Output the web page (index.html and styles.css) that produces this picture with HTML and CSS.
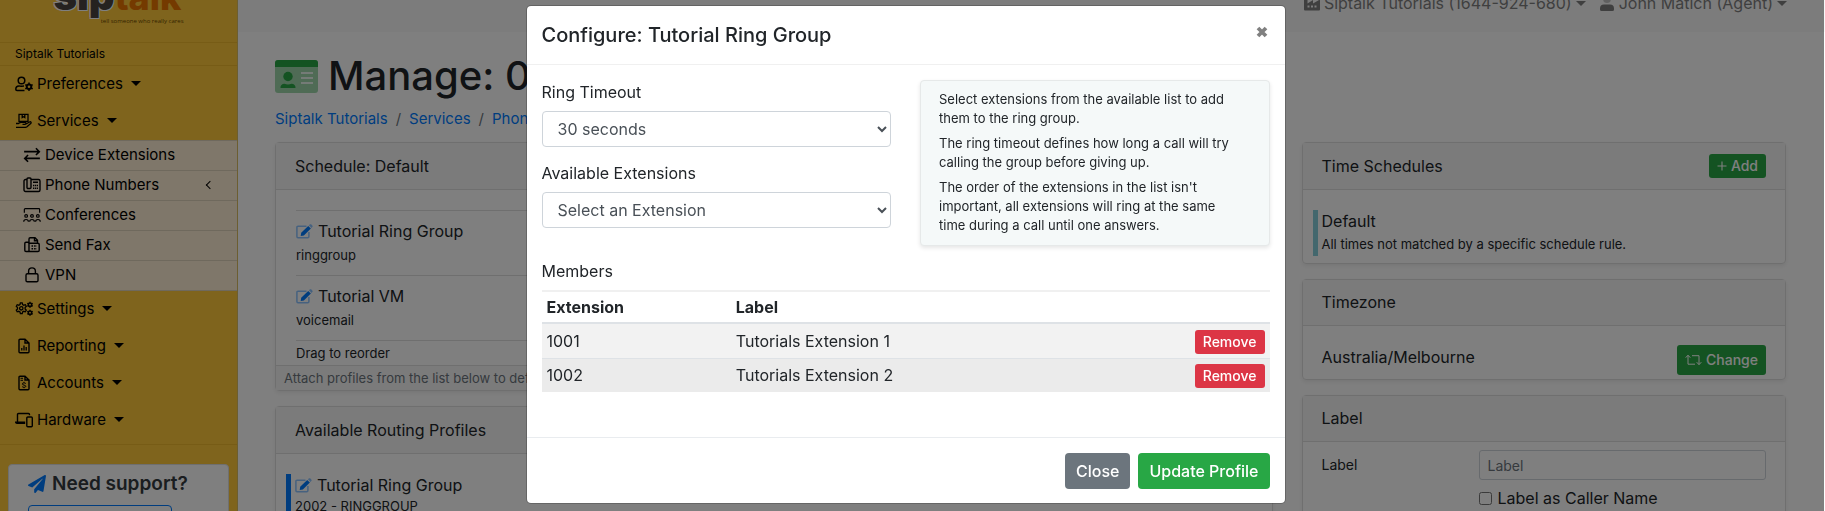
FILE: index.html
```html
<!DOCTYPE html>
<html lang="en">
<head>
<meta charset="utf-8">
<title>Siptalk - Manage</title>
<link rel="stylesheet" href="styles.css">
</head>
<body>
<svg class="sprite" aria-hidden="true">
  <symbol id="i-user-cog" viewBox="0 0 18 15"><g fill="none" stroke="currentColor" stroke-width="1.5"><circle cx="6.5" cy="4" r="3.3"/><path d="M9.5 14H2a1.2 1.2 0 0 1-1.2-1.2C.8 10.800 2 9.400 4 9.400c1 0 1.500.4 2.500.4s1.500-.4 2.500-.4"/></g><circle cx="14" cy="10.300" r="2.300" fill="none" stroke="currentColor" stroke-width="2"/><path d="M14 6v8.600M10.300 8.150l7.400 4.300M10.300 12.450l7.400-4.300" stroke="currentColor" stroke-width="1.500" stroke-dasharray="1.800 5"/></symbol>
  <symbol id="i-hand-box" viewBox="0 0 18 15"><g fill="none" stroke="currentColor" stroke-width="1.300"><path d="M4 .8h9v7H4zM7.200 1v3l1.300-.8 1.300.8V1"/><path d="M1 10h2.500c1-.8 2-1.100 3-1.100h3.500c1.400 0 1.400 1.900 0 1.900H7.500M10.500 10.800l4-2.300c1.300-.7 2.300.6 1.200 1.500l-3.700 3.200c-.5.4-1 .6-1.600.6H1"/></g></symbol>
  <symbol id="i-swap" viewBox="0 0 16 14"><g fill="none" stroke="currentColor" stroke-width="1.400"><path d="M1 4h13.500M11.500 1l3 3-3 3M15 10H1.500M4.500 7l-3 3 3 3"/></g></symbol>
  <symbol id="i-deskphone" viewBox="0 0 18 16"><g fill="none" stroke="currentColor" stroke-width="1.400"><rect x="4" y="1" width="4" height="10.500" rx="1"/><path d="M8 2.500h7.500a1.500 1.500 0 0 1 1.500 1.500v9a1.500 1.500 0 0 1-1.500 1.500h-13A1.500 1.500 0 0 1 1 13V4a1.500 1.500 0 0 1 1.500-1.500H4M10 5.200h5"/><path d="M10 8.500h5M10 11.300h5" stroke-dasharray="1.300 .6"/></g></symbol>
  <symbol id="i-conf" viewBox="0 0 20 16"><g fill="none" stroke="currentColor" stroke-width="1.300"><path d="M1.500 5.500V2A1 1 0 0 1 2.500 1h15a1 1 0 0 1 1 1v3.500"/><circle cx="3.500" cy="9" r="1.500"/><circle cx="10" cy="9" r="1.500"/><circle cx="16.500" cy="9" r="1.500"/><path d="M.8 15.500c0-3.300 5.200-3.300 5.200 0M7.400 15.500c0-3.300 5.200-3.300 5.200 0M14 15.500c0-3.300 5.200-3.300 5.200 0"/></g></symbol>
  <symbol id="i-fax" viewBox="0 0 16 16"><g fill="none" stroke="currentColor" stroke-width="1.400"><path d="M5 14.500H2A1.200 1.200 0 0 1 .8 13.300V6.500A1.200 1.200 0 0 1 2 5.300h1.800A1.200 1.200 0 0 1 5 6.500zV2A1.200 1.200 0 0 1 6.200.8h4.800L13.500 3.300v3M5 6.300h9a1.200 1.200 0 0 1 1.200 1.200v5.800a1.200 1.200 0 0 1-1.200 1.200H5M10.500 1v2.800h3"/><path d="M7.500 9h5.500M7.500 11.800h5.500" stroke-width="1.600" stroke-dasharray="1.600 1"/></g></symbol>
  <symbol id="i-lock" viewBox="0 0 14 16"><g fill="none" stroke="currentColor" stroke-width="1.400"><rect x="1" y="6.800" width="12" height="8" rx="1.400"/><path d="M3.600 6.800V4.300a3.400 3.400 0 0 1 6.800 0v2.500"/></g></symbol>
  <symbol id="i-gears" viewBox="0 0 18 15"><g fill="none" stroke="currentColor" stroke-width="1.300"><path d="M5.400 1.300h1.800l.4 1.700 1.200.7 1.600-.5.9 1.600-1.200 1.200v1.500l1.200 1.200-.9 1.600-1.600-.5-1.200.7-.4 1.700H5.400L5 10.500l-1.200-.7-1.600.5-.9-1.600 1.200-1.200V6L1.300 4.800l.9-1.600 1.600.5L5 3z"/><circle cx="6.300" cy="6.800" r="1.700"/><circle cx="15" cy="3.200" r="1.700" stroke-width="1.600"/><circle cx="15" cy="11.200" r="1.700" stroke-width="1.600"/><path d="M15 .2v1M15 5.200v1M12.300 1.700l.9.500M16.800 4.200l.9.500M12.300 4.700l.9-.5M16.800 2.200l.9-.5M15 8.200v1M15 13.200v1M12.300 9.700l.9.500M16.800 12.200l.9.500M12.300 12.700l.9-.5M16.800 10.200l.9-.5"/></g></symbol>
  <symbol id="i-report" viewBox="0 0 12 16"><path d="M2 1.200h5L11 5v8.800a1 1 0 0 1-1 1H2a1 1 0 0 1-1-1V2.200a1 1 0 0 1 1-1zM7 1.200V5h4" fill="none" stroke="currentColor" stroke-width="1.400"/><path d="M3.800 12.500v-2.500M6 12.500V7.500M8.200 12.500V9" stroke="currentColor" stroke-width="1.300"/></symbol>
  <symbol id="i-invoice" viewBox="0 0 12 16"><path d="M2 1.200h5L11 5v8.800a1 1 0 0 1-1 1H2a1 1 0 0 1-1-1V2.200a1 1 0 0 1 1-1zM7 1.200V5h4" fill="none" stroke="currentColor" stroke-width="1.400"/><path d="M2.500 3.300h2.500M2.500 5.300h2.500M7.800 8.500C6.500 7.500 4.200 7.800 4.300 9.100c.1 1.200 3.500.8 3.500 2.200 0 1.200-2.400 1.300-3.600.4M6 6.800v1M6 12.200v1" fill="none" stroke="currentColor" stroke-width="1"/></symbol>
  <symbol id="i-devices" viewBox="0 0 18 15"><g fill="none" stroke="currentColor" stroke-width="1.400"><path d="M2.500 9.500V2A1 1 0 0 1 3.500 1h10a1 1 0 0 1 1 1v.8"/><rect x="11.800" y="4.500" width="5.500" height="9.700" rx="1"/></g><path d="M0 9h10.200v2.500H2A2 2 0 0 1 0 9z" fill="currentColor"/></symbol>
  <symbol id="i-plane" viewBox="0 0 512 512"><path fill="currentColor" d="M476 3.200 12.500 270.600c-18.100 10.400-15.800 35.600 2.200 43.200L121 358.400l287.300-253.200c5.500-4.900 13.300 2.600 8.600 8.300L176 407v80.500c0 23.600 28.500 32.900 42.500 15.800L282 426l124.600 52.200c14.200 6 30.400-2.900 33-18.200l72-432C515 7.800 493.300-6.800 476 3.200z"/></symbol>
  <symbol id="i-edit" viewBox="0 0 17 15"><path d="M10.500 2.200H2a1.100 1.100 0 0 0-1.100 1.100v9.300A1.100 1.100 0 0 0 2 13.700h9.800a1.100 1.100 0 0 0 1.100-1.100V8" fill="none" stroke="currentColor" stroke-width="1.500" opacity=".45"/><path d="M12.200 1.900l2.700 2.700-7 6.800-3.200.6.5-3.300z" fill="currentColor"/><path d="M12.900 1.200l.8-.7c.5-.5 1.200-.5 1.700 0l.9.900c.5.5.5 1.200 0 1.700l-.7.800z" fill="currentColor" opacity=".45"/></symbol>
  <symbol id="i-factory" viewBox="0 0 16 15"><path fill="currentColor" fill-rule="evenodd" d="M0 1h3.500v7L9 4.500V8l6-3.500c.5-.3 1 0 1 .5V14a1 1 0 0 1-1 1H1a1 1 0 0 1-1-1zM3.500 10v2h2v-2zM7 10v2h2v-2zM10.500 10v2h2v-2z"/></symbol>
  <symbol id="i-user" viewBox="0 0 14 16"><circle cx="7" cy="4" r="3.900" fill="currentColor" opacity=".45"/><path fill="currentColor" d="M4 9.500h6a4 4 0 0 1 4 4v1a1.500 1.500 0 0 1-1.500 1.500h-11A1.500 1.500 0 0 1 0 14.500v-1a4 4 0 0 1 4-4z"/></symbol>
  <symbol id="i-card" viewBox="0 0 43 33"><rect width="43" height="33" rx="3" fill="#28a745" opacity=".45"/><path d="M3 0h37a3 3 0 0 1 3 3v4H0V3a3 3 0 0 1 3-3z" fill="#28a745"/><circle cx="13" cy="16.500" r="4.700" fill="#28a745"/><path d="M5.500 28c-.3-2.500 1.500-4.200 4-4.200 2 .8 5 .8 7 0 2.500 0 4.300 1.700 4 4.200z" fill="#28a745"/><path d="M26 13h12M26 18h12M26 23h12" stroke="#fff" stroke-width="1.800" opacity=".8"/></symbol>
  <symbol id="i-retweet" viewBox="0 0 17 12"><path d="M.7 3.700L3 1.200l2.300 2.500M3 1.500v8.700h7M7 1.700h7v8.700M11.700 8.200L14 10.700l2.300-2.500" fill="none" stroke="currentColor" stroke-width="1"/></symbol>
  <symbol id="i-plus" viewBox="0 0 10 10"><path d="M5 .5v9M.5 5h9" stroke="currentColor" stroke-width="1.100"/></symbol>
  <symbol id="i-close" viewBox="0 0 12 12"><path d="M2 2l8 8M10 2l-8 8" stroke="currentColor" stroke-width="3.800"/></symbol>
</svg>

<div class="page">
  <aside class="sidebar">
    <div class="brand">
      <div class="logo">
        <div class="logo-name"><span class="logo-sip">sip</span><span class="logo-talk">talk</span></div>
        <div class="logo-tag">tell someone who really cares</div>
      </div>
    </div>
    <div class="org">Siptalk Tutorials</div>
    <nav class="menu">
      <a class="menu-item" href="#"><svg class="menu-icon"><use href="#i-user-cog"/></svg>Preferences<i class="caret"></i></a>
      <a class="menu-item" href="#"><svg class="menu-icon"><use href="#i-hand-box"/></svg>Services<i class="caret"></i></a>
      <div class="submenu">
        <a class="sub-item" href="#"><svg class="menu-icon"><use href="#i-swap"/></svg>Device Extensions</a>
        <a class="sub-item" href="#"><svg class="menu-icon"><use href="#i-deskphone"/></svg>Phone Numbers<i class="chevron"></i></a>
        <a class="sub-item" href="#"><svg class="menu-icon"><use href="#i-conf"/></svg>Conferences</a>
        <a class="sub-item" href="#"><svg class="menu-icon"><use href="#i-fax"/></svg>Send Fax</a>
        <a class="sub-item" href="#"><svg class="menu-icon"><use href="#i-lock"/></svg>VPN</a>
      </div>
      <a class="menu-item" href="#"><svg class="menu-icon"><use href="#i-gears"/></svg>Settings<i class="caret"></i></a>
      <a class="menu-item" href="#"><svg class="menu-icon"><use href="#i-report"/></svg>Reporting<i class="caret"></i></a>
      <a class="menu-item" href="#"><svg class="menu-icon"><use href="#i-invoice"/></svg>Accounts<i class="caret"></i></a>
      <a class="menu-item" href="#"><svg class="menu-icon"><use href="#i-devices"/></svg>Hardware<i class="caret"></i></a>
    </nav>
    <div class="support">
      <h2 class="support-title"><svg class="plane"><use href="#i-plane"/></svg>Need support?</h2>
      <button class="support-button" type="button" aria-label="Contact support"></button>
    </div>
  </aside>

  <div class="content">
    <header class="topbar">
      <a class="top-link" href="#"><svg class="top-icon"><use href="#i-factory"/></svg>Siptalk Tutorials (1644-924-680)<i class="caret"></i></a>
      <a class="top-link" href="#"><svg class="top-icon"><use href="#i-user"/></svg>John Matich (Agent)<i class="caret"></i></a>
    </header>
    <main class="main">
      <h1 class="title"><svg class="title-icon"><use href="#i-card"/></svg>Manage: 0</h1>
      <nav class="crumbs"><a href="#">Siptalk Tutorials</a><span>/</span><a href="#">Services</a><span>/</span><a href="#">Phone</a></nav>
      <div class="columns">
        <div>
          <section class="card">
            <h2 class="card-head">Schedule: Default</h2>
            <div class="card-body">
              <div class="profile"><div class="profile-name"><svg class="edit"><use href="#i-edit"/></svg>Tutorial Ring Group</div><div class="small">ringgroup</div></div>
              <div class="profile"><div class="profile-name"><svg class="edit"><use href="#i-edit"/></svg>Tutorial VM</div><div class="small">voicemail</div></div>
              <div class="drag small">Drag to reorder</div>
            </div>
            <div class="card-foot small">Attach profiles from the list below to define</div>
          </section>
          <section class="card">
            <h2 class="card-head">Available Routing Profiles</h2>
            <div class="card-list">
              <div class="marked blue"><div class="profile-name"><svg class="edit"><use href="#i-edit"/></svg>Tutorial Ring Group</div><div class="small">2002 - RINGGROUP</div></div>
            </div>
          </section>
        </div>
        <div>
          <section class="card">
            <div class="card-head"><h2>Time Schedules</h2><button class="btn small-btn green" type="button"><svg class="plus"><use href="#i-plus"/></svg>Add</button></div>
            <div class="card-list">
              <div class="marked cyan"><div class="profile-name">Default</div><div class="small">All times not matched by a specific schedule rule.</div></div>
            </div>
          </section>
          <section class="card">
            <h2 class="card-head compact">Timezone</h2>
            <div class="zone"><span>Australia/Melbourne</span><button class="btn mid-btn green" type="button"><svg class="retweet"><use href="#i-retweet"/></svg>Change</button></div>
          </section>
          <section class="card">
            <h2 class="card-head compact">Label</h2>
            <div class="label-form">
              <label class="field-label" for="label">Label</label>
              <input class="text-input" id="label" type="text" placeholder="Label">
              <div class="check"><input id="caller" type="checkbox"><label for="caller">Label as Caller Name</label></div>
            </div>
          </section>
        </div>
      </div>
    </main>
  </div>
</div>

<div class="backdrop"></div>
<div class="modal-wrap">
  <div class="modal" role="dialog" aria-labelledby="modal-title">
    <div class="modal-head">
      <h2 id="modal-title">Configure: Tutorial Ring Group</h2>
      <button class="close" type="button" aria-label="Close dialog"><svg><use href="#i-close"/></svg></button>
    </div>
    <div class="modal-body">
      <div class="setup">
        <div class="fields">
          <label for="timeout">Ring Timeout</label>
          <select class="select" id="timeout"><option>30 seconds</option></select>
          <label for="ext">Available Extensions</label>
          <select class="select" id="ext"><option>Select an Extension</option></select>
        </div>
        <div class="help">
          <p>Select extensions from the available list to add them to the ring group.</p>
          <p>The ring timeout defines how long a call will try calling the group before giving up.</p>
          <p>The order of the extensions in the list isn't important, all extensions will ring at the same time during a call until one answers.</p>
        </div>
      </div>
      <h3 class="members">Members</h3>
      <table class="table">
        <thead><tr><th class="c-ext">Extension</th><th>Label</th><th class="c-act"></th></tr></thead>
        <tbody>
          <tr><td>1001</td><td>Tutorials Extension 1</td><td class="c-act"><button class="btn small-btn red" type="button">Remove</button></td></tr>
          <tr><td>1002</td><td>Tutorials Extension 2</td><td class="c-act"><button class="btn small-btn red" type="button">Remove</button></td></tr>
        </tbody>
      </table>
    </div>
    <div class="modal-foot">
      <button class="btn gray" type="button">Close</button>
      <button class="btn green" type="button">Update Profile</button>
    </div>
  </div>
</div>
</body>
</html>
```
FILE: styles.css
```css
* { box-sizing: border-box; }
html, body { height: 100%; }
body {
  margin: 0;
  overflow: hidden;
  background: #fff;
  color: #212529;
  font: 16px/24px Inter, "Open Sans", sans-serif;
}
h1, h2, h3, p { margin: 0; font-weight: 400; font-size: inherit; }
button, input, select { font: inherit; color: inherit; }
a { text-decoration: none; color: inherit; }
svg { flex: none; }
.sprite { position: absolute; width: 0; height: 0; }

/* page, scrolled slightly past the top of the header */
.page { display: flex; min-height: 100%; margin-top: -24px; }
.sidebar {
  flex: none;
  width: 238px;
  background: #ffc83a;
  border-right: 1px solid #d9bc62;
  color: #000;
  font-size: 15px;
}
.brand { display: flex; justify-content: center; height: 67px; border-bottom: 1px solid #eeb92c; }
.logo { display: flex; flex-direction: column; width: 130px; }
.logo-name { font-size: 40px; line-height: 39px; font-weight: 900; white-space: nowrap; }
.logo-sip { color: #4a4540; text-shadow: 1px 1px 0 #fff, -1px 1px 0 #fff, 1px -1px 0 #fff, -1px -1px 0 #fff; }
.logo-talk { color: #e87400; font-weight: 800; font-size: 36px; }
.logo-tag { align-self: flex-end; color: #6b4b00; font: 6px/8px "Open Sans", sans-serif; white-space: nowrap; }
.org { padding: 0 15px; border-bottom: 1px solid #eeb92c; font-size: 12px; line-height: 22px; }
.menu { padding-bottom: 5px; border-bottom: 1px solid #eeb92c; }
.menu-item { display: flex; align-items: center; height: 37px; padding: 0 0 2px 15px; }
.menu-icon { width: 18px; height: 16px; margin-right: 4px; }
.caret { margin-left: 8px; border: 5px solid transparent; border-top-color: currentColor; border-bottom: 0; }
.submenu { border-top: 1px solid #ded2bb; background: #ffeed4; }
.sub-item {
  display: flex;
  align-items: center;
  height: 30px;
  padding: 0 24px 2px 23px;
  border-bottom: 1px solid #ded2bb;
}
.chevron { width: 6px; height: 6px; margin-left: auto; border: solid; border-width: 0 0 1px 1px; rotate: 45deg; }
.support { margin: 19px 8px 0; padding: 7px 19px 40px; border: 1px solid #dfdfdf; border-radius: 4px; background: #fff; }
.support-title { display: flex; align-items: center; gap: 6px; color: #343a40; font-size: 19px; font-weight: 600; }
.plane { width: 18px; height: 18px; color: #007bff; }
.support-button { display: block; width: 144px; height: 36px; margin-top: 9px; border: 1px solid #007bff; border-radius: 4px; background: none; }

.content { flex: 1; min-width: 0; }
.topbar {
  display: flex;
  justify-content: flex-end;
  align-items: flex-start;
  gap: 13px;
  height: 56px;
  padding: 15px 38px 0;
  background: #f8f8f8;
  color: #7f7f7f;
}
.top-link { display: flex; align-items: center; }
.top-icon { width: 16px; height: 16px; margin-right: 4px; }
.top-link .caret { margin-left: 4px; }
.main { padding: 20px 39px 0 37px; }
.title { display: flex; align-items: center; gap: 10px; font-size: 40px; line-height: 48px; font-weight: 500; }
.title-icon { width: 43px; height: 33px; }
.crumbs { display: flex; gap: 8px; margin: 7px 0 11px; font-size: 15px; color: #6c757d; }
.crumbs a { color: #007bff; }
.columns { display: grid; grid-template-columns: 35fr 17fr; gap: 29px; }
.card { margin-bottom: 15px; border: 1px solid #dfdfdf; border-radius: 4px; box-shadow: 0 2px 4px rgba(0,0,0,.075); }
.card-head {
  display: flex;
  justify-content: space-between;
  align-items: center;
  height: 47px;
  padding: 0 19px 1px;
  border-bottom: 1px solid #dfdfdf;
  background: #f7f7f7;
}
.compact { height: 46px; }
.card-body { padding: 20px 20px 0; }
.profile { padding: 8px 0; border-top: 1px solid #dfdfdf; }
.profile-name { display: flex; align-items: center; gap: 5px; }
.edit { width: 17px; height: 15px; color: #007bff; }
.small { font-size: 13px; }
.drag { border-top: 1px solid #dfdfdf; }
.card-foot { padding: 0 8px; border-top: 1px solid #dfdfdf; background: #f7f7f7; color: #6c757d; }
.card-list { padding: 20px 10px 7px; }
.marked { padding-left: 4px; border-left: 5px solid; }
.marked .profile-name { line-height: 22px; }
.blue { border-color: #007bff; }
.blue .small { line-height: 20px; }
.cyan { border-color: #86cfda; }
.zone { display: flex; justify-content: space-between; padding: 19px 19px 4px; }
.label-form { display: grid; grid-template-columns: 157px 1fr; row-gap: 6px; padding: 8px 19px; align-items: center; }
.field-label { font-size: 14px; }
.text-input { width: 100%; height: 30px; padding: 0 8px; border: 1px solid #ced4da; border-radius: 3px; font-size: 14px; background: #fff; }
.text-input::placeholder { color: #6c757d; }
.check { grid-column: 2; display: flex; align-items: center; gap: 6px; }
.check input { width: 13px; height: 13px; margin: 0; }

.btn { height: 36px; padding: 0 11px; border: 0; border-radius: 4px; color: #fff; font-weight: 500; }
.small-btn { display: inline-flex; align-items: center; gap: 4px; height: 24px; padding: 0 8px; border-radius: 3px; font-size: 14px; }
.mid-btn { display: flex; align-items: center; gap: 4px; height: 30px; padding: 0 8px; border-radius: 3px; font-size: 14px; }
.green { background: #28a745; }
.red { background: #dc3545; }
.gray { background: #6c757d; }
.plus { width: 10px; height: 10px; }
.retweet { width: 17px; height: 12px; }

.backdrop { position: fixed; inset: 0 1px 0 0; background: rgba(0,0,0,.5); }
.modal-wrap { position: fixed; inset: 0; display: flex; justify-content: center; align-items: flex-start; padding: 5px 14px 0 0; }
.modal { width: 760px; border: 1px solid rgba(0,0,0,.2); border-radius: 5px; background: #fff; background-clip: padding-box; }
.modal-head { display: flex; justify-content: space-between; align-items: flex-start; padding: 14px 15px; border-bottom: 1px solid #f0f0f0; }
.modal-head h2 { font-size: 20px; line-height: 30px; font-weight: 500; }
.close { padding: 6px 2px; border: 0; background: none; color: #808080; line-height: 0; }
.close svg { width: 12px; height: 12px; }
.modal-body { padding: 15px 15px 45px; }
.setup { display: grid; grid-template-columns: 1fr 1fr; gap: 29px; align-items: start; }
.fields { display: flex; flex-direction: column; }
.select { height: 36px; margin: 7px 0 14px; padding: 0 11px; border: 1px solid #ced4da; border-radius: 4px; background: #fff; color: #495057; }
.help {
  display: flex;
  flex-direction: column;
  gap: 6px;
  padding: 9px 30px 10px 18px;
  border: 1px solid #e6e9e9;
  border-radius: 4px;
  background: #f5f9f9;
  box-shadow: 0 2px 4px rgba(0,0,0,.1);
  font-size: 13px;
  line-height: 19px;
}
.members { margin: 13px 0 7px; }
.table { width: 100%; border-collapse: collapse; table-layout: fixed; }
.table th, .table td { height: 34px; padding: 4px 5px; border-top: 1px solid #dee2e6; text-align: left; vertical-align: middle; }
.table th { height: 32px; padding: 3px 5px; border-top: 2px solid #f0f0f0; border-bottom: 2px solid #dee2e6; font-weight: 700; }
.table .c-ext { width: 26%; }
.table .c-act { width: 25%; text-align: right; }
.table .btn { vertical-align: middle; }
.table tbody tr:nth-child(1) { background: #f2f2f2; }
.table tbody tr:nth-child(2) { background: #ebebeb; }
.modal-foot { display: flex; justify-content: flex-end; gap: 8px; padding: 15px 15px 14px; border-top: 1px solid #e9ecef; }
```
